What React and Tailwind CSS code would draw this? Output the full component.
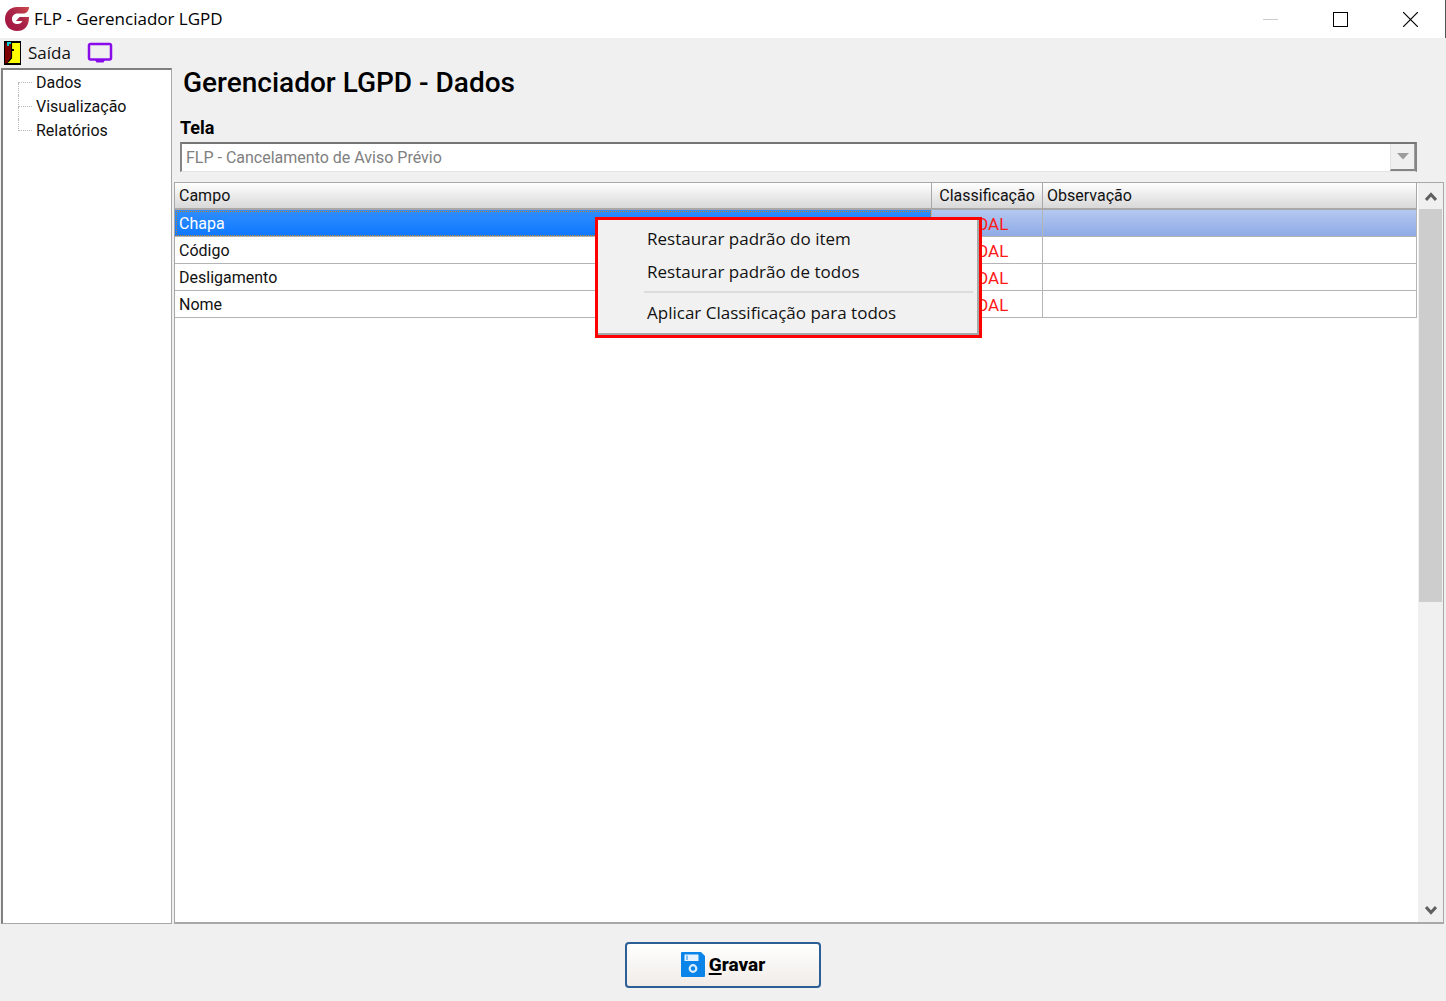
import React from "react";

const navItems = ["Dados", "Visualização", "Relatórios"];

const rows = [
  { campo: "Chapa", classificacao: "PESSOAL", observacao: "" },
  { campo: "Código", classificacao: "PESSOAL", observacao: "" },
  { campo: "Desligamento", classificacao: "PESSOAL", observacao: "" },
  { campo: "Nome", classificacao: "PESSOAL", observacao: "" },
];

function BrandIcon() {
  return (
    <svg width="24" height="24" viewBox="0 0 24 24" aria-hidden="true">
      <defs>
        <linearGradient id="brand" x1="0" y1="1" x2="1" y2="0">
          <stop offset="0" stopColor="#a5123f" />
          <stop offset="0.55" stopColor="#a82347" />
          <stop offset="1" stopColor="#cf4a4c" />
        </linearGradient>
      </defs>
      <path
        fill="url(#brand)"
        d="M24 0H12C5 0 0 5 0 12s5 12 12 12c7.500 0 12-4.500 12-14H14.500l-3.500 4h6.500c-1 2-2.500 3-5 3-3.500 0-5.500-2-5.500-5S9 6.500 12.500 6.500H18c3.500 0 6-2.500 6-6.500Z"
      />
    </svg>
  );
}

function DoorIcon() {
  return (
    <svg width="17" height="24" viewBox="0 0 17 24" aria-hidden="true">
      <rect width="17" height="24" fill="#000" />
      <path d="M1 2h6v17l-3 3H1Z" fill="#7d0000" />
      <path d="M8 2h8v20H4v-2l4-3Z" fill="#ff0" />
      <path d="M3 1h4v2H5v2H3Z" fill="#00d0d8" />
      <path d="M7.500 2v15L4 21" fill="none" stroke="#000" strokeWidth="1.200" />
      <path d="M7 9h3" stroke="#000" strokeWidth="2" />
    </svg>
  );
}

function MonitorIcon() {
  return (
    <svg width="26" height="22" viewBox="0 0 26 22" aria-hidden="true">
      <rect x="2" y="2" width="22" height="15.500" rx="1.500" fill="none" stroke="#8a0bea" strokeWidth="2.500" />
      <path d="M8 17h10v1l-1.500 2.500h-7L8 18Z" fill="#8a0bea" />
    </svg>
  );
}

function SaveIcon() {
  return (
    <svg width="24" height="25" viewBox="0 0 24 25" aria-hidden="true">
      <path d="M1 0h19l4 4v20a1 1 0 0 1-1 1H1a1 1 0 0 1-1-1V1a1 1 0 0 1 1-1Z" fill="#0a84e8" />
      <rect x="3.500" y="2.500" width="14" height="6.500" fill="#e6f3fe" />
      <rect x="5" y="3.500" width="2" height="4.500" fill="#7dbdf4" />
      <circle cx="12" cy="16.500" r="3.300" fill="none" stroke="#d9edfd" strokeWidth="2.200" />
    </svg>
  );
}

function TitleBar() {
  return (
    <header className="flex h-[38px] items-center border-r border-[#555] bg-white pl-[5px]">
      <BrandIcon />
      <h1 className="ml-[5px] flex-1 font-['Open_Sans',sans-serif] text-[17px] leading-6 text-black">
        FLP - Gerenciador LGPD
      </h1>
      <button type="button" aria-label="Minimizar" className="flex h-full w-[70px] items-center justify-center">
        <svg width="15" height="15" viewBox="0 0 15 15" shapeRendering="crispEdges">
          <path d="M0 7.500h15" stroke="#ccc" />
        </svg>
      </button>
      <button type="button" aria-label="Maximizar" className="flex h-full w-[70px] items-center justify-center">
        <svg width="15" height="15" viewBox="0 0 15 15" shapeRendering="crispEdges">
          <rect x="0.500" y="0.500" width="14" height="14" fill="none" stroke="#000" />
        </svg>
      </button>
      <button type="button" aria-label="Fechar" className="flex h-full w-[70px] items-center justify-center">
        <svg width="15" height="15" viewBox="0 0 15 15">
          <path d="m0 0 15 15M15 0 0 15" stroke="#000" strokeWidth="1.200" />
        </svg>
      </button>
    </header>
  );
}

function NavTree() {
  return (
    <nav className="w-[171px] border-t-2 border-r border-b border-l-2 border-t-[#808080] border-r-[#a8a8a8] border-b-[#a8a8a8] border-l-[#808080] bg-white">
      <ul className="pt-px pl-[15px]">
        {navItems.map((item, i) => (
          <li key={item} className="flex h-6 items-center">
            <span className="flex h-full w-[14px] flex-col" aria-hidden="true">
              <span className={`h-1/2 border-b border-dotted border-b-[#b8b8b8] ${i > 0 ? "border-l border-l-[#b8b8b8]" : ""}`} />
              <span className={`h-1/2 border-dotted border-l-[#b8b8b8] ${i < navItems.length - 1 ? "border-l" : ""}`} />
            </span>
            <a href="#" className="ml-1">{item}</a>
          </li>
        ))}
      </ul>
    </nav>
  );
}

function ScreenSelect() {
  return (
    <div className="flex h-[30px] border-t-2 border-r-2 border-b border-l-2 border-t-[#757575] border-r-[#858585] border-b-[#e3e3e3] border-l-[#858585] bg-white">
      <select
        id="tela"
        disabled
        className="min-w-0 flex-1 appearance-none bg-white pl-1 text-[#808080] opacity-100"
      >
        <option>FLP - Cancelamento de Aviso Prévio</option>
      </select>
      <span className="flex w-[25px] items-center justify-center border-r border-b-2 border-l border-r-[#a0a0a0] border-b-[#858585] border-l-[#e3e3e3] bg-[#f0f0f0]">
        <svg width="12" height="7" viewBox="0 0 12 7" aria-hidden="true">
          <path d="M0 0h12L6 6.500Z" fill="#9c9c9c" />
        </svg>
      </span>
    </div>
  );
}

function FieldTable() {
  const head = "border-b-2 border-r border-[#a8a8a8] bg-linear-to-b from-white to-[#d8d8d8] p-0 pt-px font-normal";
  const cell = "border-r border-b border-[#b4b4b4] p-0 pt-px pl-1";
  return (
    <table className="w-full table-fixed border-separate border-spacing-0">
      <colgroup>
        <col />
        <col className="w-[111px]" />
        <col className="w-[374px]" />
      </colgroup>
      <thead>
        <tr className="h-[27px]">
          <th className={`${head} pl-1 text-left`}>Campo</th>
          <th className={`${head} text-center`}>Classificação</th>
          <th className={`${head} pl-1 text-left`}>Observação</th>
        </tr>
      </thead>
      <tbody>
        {rows.map((row, i) => {
          const tint = i === 0 ? "bg-linear-to-b from-[#b4c8f0] to-[#8faae6]" : "";
          const first = i === 0
            ? "bg-linear-to-b from-[#2f8eff] to-[#0a78ff] text-white outline-1 -outline-offset-2 outline-dotted outline-[#c08030]"
            : "";
          return (
            <tr key={row.campo} className="h-[27px]">
              <td className={`${cell} ${first}`}>{row.campo}</td>
              <td className={`${cell} text-[17px] text-[#ff1818] ${tint}`}>{row.classificacao}</td>
              <td className={`${cell} ${tint}`}>{row.observacao}</td>
            </tr>
          );
        })}
      </tbody>
    </table>
  );
}

function ScrollBar() {
  return (
    <div className="ml-px flex w-[25px] flex-col bg-[#f0f0f0]">
      <button type="button" aria-label="Rolar para cima" className="flex h-[26px] items-center justify-center">
        <svg width="12" height="9" viewBox="0 0 12 9">
          <path d="M1 8 6 2.500 11 8" fill="none" stroke="#606060" strokeWidth="3" />
        </svg>
      </button>
      <div className="flex-1 px-px">
        <div className="h-[57%] bg-[#cdcdcd]" />
      </div>
      <button type="button" aria-label="Rolar para baixo" className="flex h-6 items-center justify-center">
        <svg width="12" height="9" viewBox="0 0 12 9">
          <path d="M1 1 6 6.500 11 1" fill="none" stroke="#606060" strokeWidth="3" />
        </svg>
      </button>
    </div>
  );
}

function ContextMenu() {
  const item = "block h-[33px] w-full pl-[49px] text-left";
  return (
    <div
      role="menu"
      className="absolute top-[34px] left-[420px] w-[387px] border-[3px] border-[#ff0000] bg-[#f1f1f1] font-['Open_Sans',sans-serif] text-[17px] text-[#111]"
    >
      <div className="border-r-2 border-b-2 border-[#a8a8a8] pt-[2px] pb-1">
        <button type="button" role="menuitem" className={item}>Restaurar padrão do item</button>
        <button type="button" role="menuitem" className={item}>Restaurar padrão de todos</button>
        <hr className="my-[3px] mr-1 ml-[46px] border-t-2 border-[#dcdcdc]" />
        <button type="button" role="menuitem" className={item}>Aplicar Classificação para todos</button>
      </div>
    </div>
  );
}

export default function App() {
  return (
    <div className="flex min-h-screen flex-col bg-[#f0f0f0] font-['Roboto',sans-serif] text-[16px] leading-6 text-[#111]">
      <TitleBar />
      <div className="flex h-[30px] items-center pl-1">
        <button type="button" className="flex items-center gap-[7px] font-['Open_Sans',sans-serif] text-[17px]">
          <DoorIcon />
          Saída
        </button>
        <button type="button" aria-label="Monitor" className="ml-4">
          <MonitorIcon />
        </button>
      </div>

      <div className="flex flex-1 gap-[2px] pr-[2px] pl-px">
        <NavTree />
        <main className="flex min-w-0 flex-1 flex-col">
          <h2 className="pl-[9px] text-[28px] leading-[30px] font-medium text-black">
            Gerenciador LGPD - Dados
          </h2>
          <div className="mt-[18px] mr-[27px] mb-[10px] ml-[6px]">
            <label htmlFor="tela" className="block h-[26px] text-[18px] font-bold text-black">Tela</label>
            <ScreenSelect />
          </div>
          <div className="relative flex flex-1 border border-b-2 border-[#a8a8a8] bg-white">
            <div className="min-w-0 flex-1">
              <FieldTable />
            </div>
            <ScrollBar />
            <ContextMenu />
          </div>
        </main>
      </div>

      <footer className="flex h-[77px] items-center justify-center">
        <button
          type="button"
          className="mt-1 flex h-[46px] w-[196px] items-center justify-center gap-1 rounded border-2 border-[#2c5f96] bg-linear-to-b from-white to-[#f0ece8] text-[19px] font-extrabold text-black"
        >
          <SaveIcon />
          <span><span className="underline decoration-2 underline-offset-2">G</span>ravar</span>
        </button>
      </footer>
    </div>
  );
}
